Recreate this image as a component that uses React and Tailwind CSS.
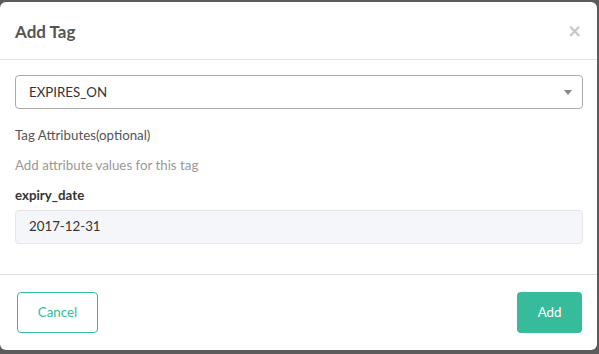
function App() {

  return (

    <div className="w-[599px] h-[354px] bg-[#5c5c5c] pt-[2px] overflow-hidden" style={{ fontFamily: "Lato, 'Noto Sans', sans-serif" }}>

      {/* MODAL */}
      <div className="w-[597px] h-[348px] bg-white rounded-[6px] flex flex-col">

        {/* HEADER */}
        <div className="h-[58px] border-b border-[#e5e5e5] flex items-center justify-between pl-[15px] pr-[16px]">

          <h1 className="text-[17px] font-bold text-[#555] pt-[3px]">Add Tag</h1>

          <span className="text-[#c8c8c8] text-[22px] font-bold leading-none">×</span>

        </div>

        {/* BODY */}
        <div className="px-[15px] pt-[15px] h-[215px] border-b border-[#e0e0e0]">

          <div className="h-[34px] w-[568px] border border-[#aaa] rounded-[4px] flex items-center justify-between pl-[13px] pr-[10px]">

            <span className="text-[13.3px] text-[#333] pt-[1px]">EXPIRES_ON</span>

            <svg width="8" height="5" viewBox="0 0 8 5">
              <path d="M0 0 L8 0 L4 5 Z" fill="#888" />
            </svg>

          </div>

          <p className="text-[13.3px] text-[#555] mt-[17px] leading-[18px]">Tag Attributes(optional)</p>

          <p className="text-[13.3px] text-[#999] mt-[12px] leading-[18px]">Add attribute values for this tag</p>

          <p className="text-[13.3px] font-bold text-[#333] mt-[12px] leading-[18px]">expiry_date</p>

          <div className="h-[34px] w-[568px] mt-[6px] bg-[#f5f6f9] border border-[#e4e6eb] rounded-[4px] flex items-center pl-[13px]">

            <span className="text-[13.3px] text-[#333]">2017-12-31</span>

          </div>

        </div>

        {/* FOOTER */}
        <div className="flex justify-between items-center pl-[17px] pr-[15px] pt-[17px]">

          <button className="w-[81px] h-[41px] border border-[#37bc9b] rounded-[4px] text-[13.3px] text-[#37bc9b] pt-[1px]">
            Cancel
          </button>

          <button className="w-[65px] h-[41px] bg-[#37bc9b] rounded-[4px] text-[13.3px] text-white pt-[1px]">
            Add
          </button>

        </div>

      </div>

    </div>

  )

}

export default App
